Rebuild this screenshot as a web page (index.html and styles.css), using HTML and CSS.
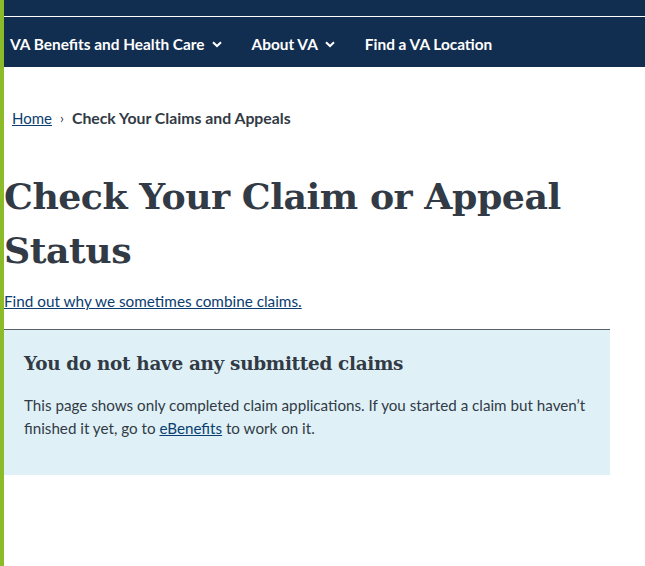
FILE: index.html
```html
<!DOCTYPE html>
<html lang="en">
<head>
<meta charset="utf-8">
<title>Check Your Claim or Appeal Status</title>
<link rel="stylesheet" href="styles.css">
</head>
<body>
<div class="page">
  <header class="header">
    <nav class="nav">
      <a class="nav-item" href="#">VA Benefits and Health Care
        <svg class="chev" viewBox="0 0 10 7" width="10" height="7"><path d="M1 1.2 L5 5 L9 1.2" fill="none" stroke="#fff" stroke-width="2"/></svg>
      </a>
      <a class="nav-item" href="#">About VA
        <svg class="chev" viewBox="0 0 10 7" width="10" height="7"><path d="M1 1.2 L5 5 L9 1.2" fill="none" stroke="#fff" stroke-width="2"/></svg>
      </a>
      <a class="nav-item" href="#">Find a VA Location</a>
    </nav>
  </header>
  <main class="main">
    <div class="breadcrumbs">
      <a href="#" class="crumb-link">Home</a>
      <span class="crumb-sep">›</span>
      <span class="crumb-current">Check Your Claims and Appeals</span>
    </div>
    <h1 class="title">Check Your Claim or Appeal Status</h1>
    <a href="#" class="combine-link">Find out why we sometimes combine claims.</a>
    <div class="alert">
      <h2 class="alert-title">You do not have any submitted claims</h2>
      <p class="alert-text">This page shows only completed claim applications. If you started a claim but haven’t finished it yet, go to <a href="#" class="inline-link">eBenefits</a> to work on it.</p>
    </div>
  </main>
</div>
</body>
</html>
```
FILE: styles.css
```css
html, body {
  margin: 0;
  padding: 0;
  background: #fff;
}
body {
  font-family: "Source Sans Pro", Lato, "Noto Sans", sans-serif;
  color: #212121;
}
.page {
  border-left: 4px solid #8bbb29;
  min-height: 566px;
  box-sizing: border-box;
}
.header {
  background: #112e51;
  padding-top: 16px;
}
.nav {
  border-top: 1px solid #fff;
  height: 51px;
  box-sizing: border-box;
  padding: 4px 0 0 6px;
  display: flex;
  align-items: center;
}
.nav-item {
  color: #fff;
  text-decoration: none;
  font-weight: 700;
  font-size: 15.4px;
  display: flex;
  align-items: center;
  margin-right: 30px;
}
.chev {
  margin-left: 7px;
}
.main {
  width: 606px;
}
.breadcrumbs {
  padding: 41px 0 0 8px;
  font-size: 15px;
  line-height: 20px;
  display: flex;
  align-items: center;
}
.crumb-link {
  color: #0b3d70;
  text-decoration: underline;
}
.crumb-sep {
  margin: 0 8px;
  font-size: 14px;
  color: #323a45;
}
.crumb-current {
  font-weight: 700;
  font-size: 15.8px;
  color: #323a45;
}
.title {
  font-family: "DejaVu Serif", serif;
  font-weight: 700;
  font-size: 36.3px;
  line-height: 54px;
  color: #323a45;
  margin: 42px 0 0 0;
  letter-spacing: -0.5px;
}
.combine-link {
  display: block;
  margin-top: 11px;
  font-size: 15.3px;
  line-height: 24px;
  color: #0b3d70;
  text-decoration: underline;
  padding-bottom: 16px;
  border-bottom: 1px solid #5b616b;
}
.alert {
  background: #dff1f7;
  padding: 20px 20px 35px 20px;
}
.alert-title {
  font-family: "DejaVu Serif", serif;
  font-weight: 700;
  font-size: 18.4px;
  line-height: 28px;
  color: #323a45;
  margin: 0 0 16px 0;
  letter-spacing: -0.3px;
}
.alert-text {
  margin: 0;
  font-size: 15.2px;
  line-height: 23px;
  color: #323a45;
}
.inline-link {
  color: #0b3d70;
}
```
